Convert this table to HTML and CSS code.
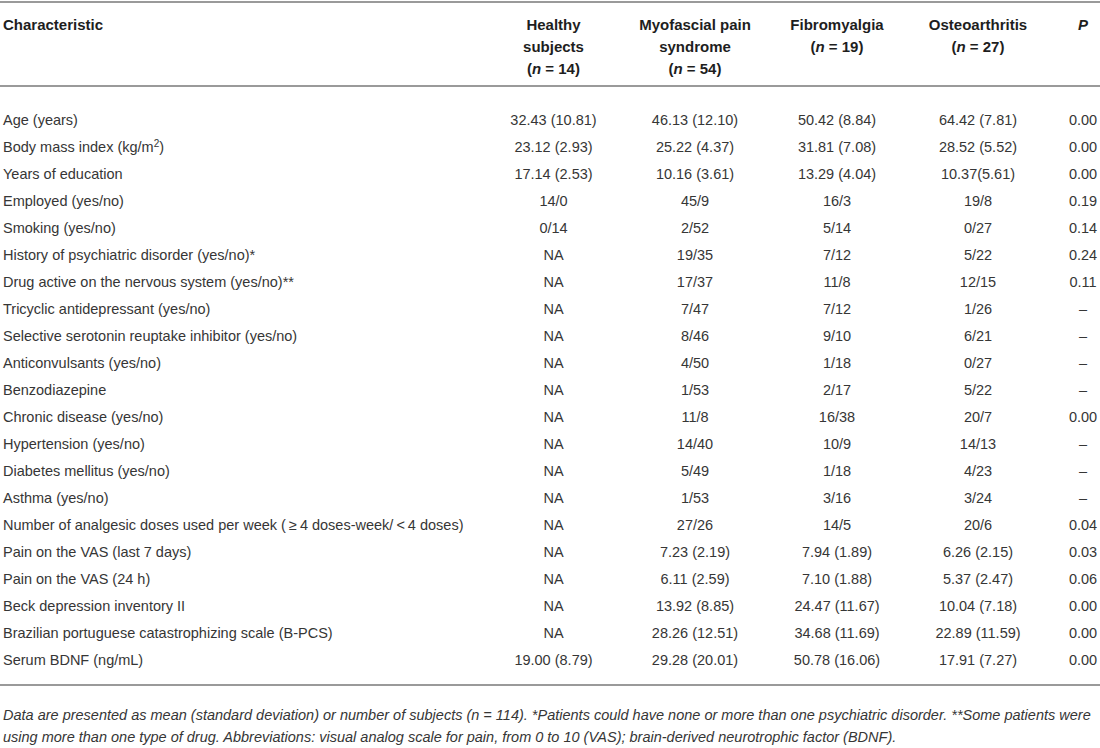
FILE: index.html
```html
<!DOCTYPE html>
<html>
<head>
<meta charset="utf-8">
<link rel="stylesheet" href="styles.css">
</head>
<body>
<div class="page">
<table class="data">
<colgroup>
<col class="c-char"><col class="c-num"><col class="c-num2"><col class="c-num2"><col class="c-num3"><col class="c-p">
</colgroup>
<thead>
<tr>
<th class="left">Characteristic</th>
<th>Healthy<br>subjects<br>(<i>n</i> = 14)</th>
<th>Myofascial pain<br>syndrome<br>(<i>n</i> = 54)</th>
<th>Fibromyalgia<br>(<i>n</i> = 19)</th>
<th>Osteoarthritis<br>(<i>n</i> = 27)</th>
<th class="pcol"><i>P</i></th>
</tr>
</thead>
<tbody>
<tr class="first"><td class="left">Age (years)</td><td>32.43 (10.81)</td><td>46.13 (12.10)</td><td>50.42 (8.84)</td><td>64.42 (7.81)</td><td class="pcol">0.00</td></tr>
<tr><td class="left">Body mass index (kg/m<sup>2</sup>)</td><td>23.12 (2.93)</td><td>25.22 (4.37)</td><td>31.81 (7.08)</td><td>28.52 (5.52)</td><td class="pcol">0.00</td></tr>
<tr><td class="left">Years of education</td><td>17.14 (2.53)</td><td>10.16 (3.61)</td><td>13.29 (4.04)</td><td>10.37(5.61)</td><td class="pcol">0.00</td></tr>
<tr><td class="left">Employed (yes/no)</td><td>14/0</td><td>45/9</td><td>16/3</td><td>19/8</td><td class="pcol">0.19</td></tr>
<tr><td class="left">Smoking (yes/no)</td><td>0/14</td><td>2/52</td><td>5/14</td><td>0/27</td><td class="pcol">0.14</td></tr>
<tr><td class="left">History of psychiatric disorder (yes/no)*</td><td>NA</td><td>19/35</td><td>7/12</td><td>5/22</td><td class="pcol">0.24</td></tr>
<tr><td class="left">Drug active on the nervous system (yes/no)**</td><td>NA</td><td>17/37</td><td>11/8</td><td>12/15</td><td class="pcol">0.11</td></tr>
<tr><td class="left">Tricyclic antidepressant (yes/no)</td><td>NA</td><td>7/47</td><td>7/12</td><td>1/26</td><td class="pcol">–</td></tr>
<tr><td class="left">Selective serotonin reuptake inhibitor (yes/no)</td><td>NA</td><td>8/46</td><td>9/10</td><td>6/21</td><td class="pcol">–</td></tr>
<tr><td class="left">Anticonvulsants (yes/no)</td><td>NA</td><td>4/50</td><td>1/18</td><td>0/27</td><td class="pcol">–</td></tr>
<tr><td class="left">Benzodiazepine</td><td>NA</td><td>1/53</td><td>2/17</td><td>5/22</td><td class="pcol">–</td></tr>
<tr><td class="left">Chronic disease (yes/no)</td><td>NA</td><td>11/8</td><td>16/38</td><td>20/7</td><td class="pcol">0.00</td></tr>
<tr><td class="left">Hypertension (yes/no)</td><td>NA</td><td>14/40</td><td>10/9</td><td>14/13</td><td class="pcol">–</td></tr>
<tr><td class="left">Diabetes mellitus (yes/no)</td><td>NA</td><td>5/49</td><td>1/18</td><td>4/23</td><td class="pcol">–</td></tr>
<tr><td class="left">Asthma (yes/no)</td><td>NA</td><td>1/53</td><td>3/16</td><td>3/24</td><td class="pcol">–</td></tr>
<tr><td class="left">Number of analgesic doses used per week (<span class="op">≥</span>4 doses-week/<span class="op">&lt;</span>4 doses)</td><td>NA</td><td>27/26</td><td>14/5</td><td>20/6</td><td class="pcol">0.04</td></tr>
<tr><td class="left">Pain on the VAS (last 7 days)</td><td>NA</td><td>7.23 (2.19)</td><td>7.94 (1.89)</td><td>6.26 (2.15)</td><td class="pcol">0.03</td></tr>
<tr><td class="left">Pain on the VAS (24 h)</td><td>NA</td><td>6.11 (2.59)</td><td>7.10 (1.88)</td><td>5.37 (2.47)</td><td class="pcol">0.06</td></tr>
<tr><td class="left">Beck depression inventory II</td><td>NA</td><td>13.92 (8.85)</td><td>24.47 (11.67)</td><td>10.04 (7.18)</td><td class="pcol">0.00</td></tr>
<tr><td class="left">Brazilian portuguese catastrophizing scale (B-PCS)</td><td>NA</td><td>28.26 (12.51)</td><td>34.68 (11.69)</td><td>22.89 (11.59)</td><td class="pcol">0.00</td></tr>
<tr class="last"><td class="left">Serum BDNF (ng/mL)</td><td>19.00 (8.79)</td><td>29.28 (20.01)</td><td>50.78 (16.06)</td><td>17.91 (7.27)</td><td class="pcol">0.00</td></tr>
</tbody>
</table>
<p class="note">Data are presented as mean (standard deviation) or number of subjects (n = 114). *Patients could have none or more than one psychiatric disorder. **Some patients were using more than one type of drug. Abbreviations: visual analog scale for pain, from 0 to 10 (VAS); brain-derived neurotrophic factor (BDNF).</p>
</div>
</body>
</html>
```
FILE: styles.css
```css
html, body {
  margin: 0;
  padding: 0;
  background: #ffffff;
}
body {
  font-family: "Liberation Sans", Arial, sans-serif;
  font-size: 14.5px;
  color: #2b2b2b;
  width: 1100px;
  height: 748px;
  overflow: hidden;
}
.page {
  padding-top: 1px;
}
.data {
  width: 1100px;
  border-collapse: collapse;
  table-layout: fixed;
  border-top: 2px solid #9a9a9a;
  border-bottom: 2px solid #9a9a9a;
}
.c-char { width: 483px; }
.c-num { width: 141px; }
.c-num2 { width: 142px; }
.c-num3 { width: 140px; }
.c-p { width: 52px; }
.data th {
  font-size: 15px;
  font-weight: bold;
  color: #1e1e1e;
  line-height: 22px;
  padding: 11px 0 5px 0;
  vertical-align: top;
  text-align: center;
  border-bottom: 2px solid #9a9a9a;
}
.data td {
  line-height: 27px;
  height: 27px;
  padding: 0;
  text-align: center;
  white-space: nowrap;
  color: #363636;
}
.data .left {
  text-align: left;
  padding-left: 3px;
}
.data .pcol {
  padding-left: 18px;
}
.data tr.first td {
  padding-top: 20px;
}
.data tr.last td {
  padding-bottom: 10px;
}
.op {
  padding: 0 3px;
}
sup {
  font-size: 10px;
  line-height: 0;
  vertical-align: 5px;
}
.note {
  margin: 18px 0 0 0;
  padding: 0 3px;
  font-style: italic;
  line-height: 22px;
  color: #363636;
}
```
